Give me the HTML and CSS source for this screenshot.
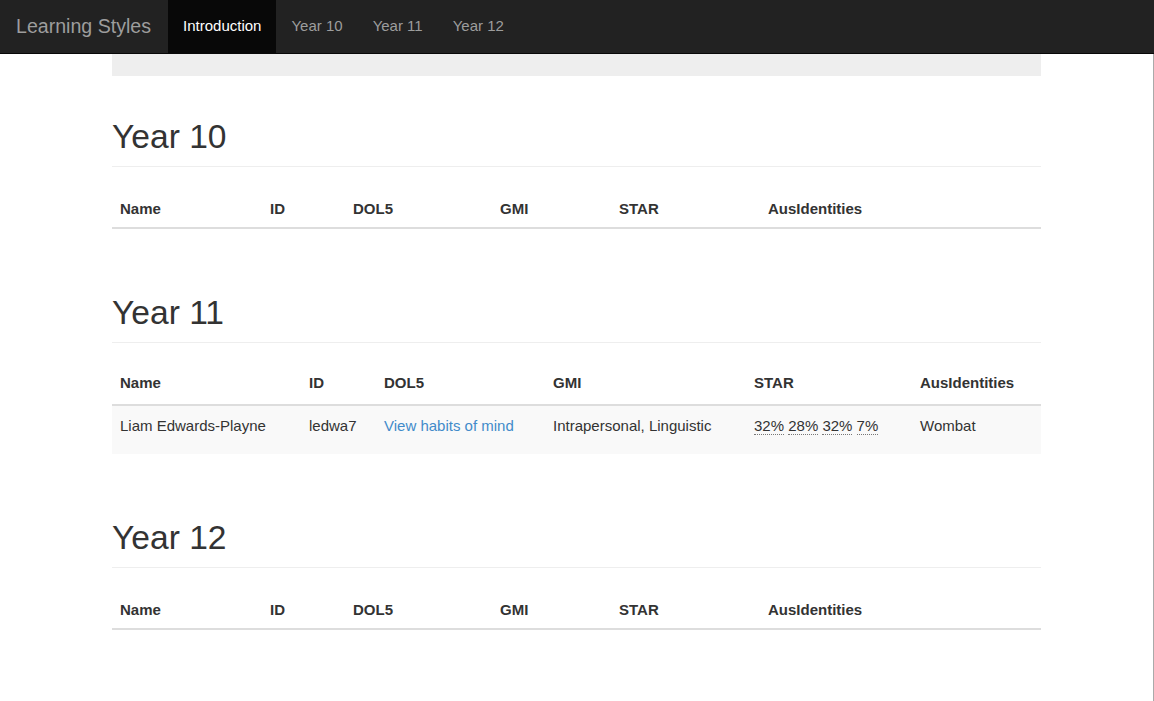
FILE: index.html
```html
<!DOCTYPE html>
<html lang="en">
<head>
<meta charset="utf-8">
<title>Learning Styles</title>
<link rel="stylesheet" href="styles.css">
</head>
<body>
<nav class="navbar">
  <a class="brand" href="#">Learning Styles</a>
  <ul class="nav">
    <li class="active"><a href="#">Introduction</a></li>
    <li><a href="#">Year 10</a></li>
    <li><a href="#">Year 11</a></li>
    <li><a href="#">Year 12</a></li>
  </ul>
</nav>
<div class="edge"></div>
<main class="container">
  <div class="jumbotron"></div>

  <section class="year">
    <h1 class="page-header">Year 10</h1>
    <table class="table t-empty">
      <thead>
        <tr><th class="c1">Name</th><th class="c2">ID</th><th class="c3">DOL5</th><th class="c4">GMI</th><th class="c5">STAR</th><th class="c6">AusIdentities</th></tr>
      </thead>
      <tbody></tbody>
    </table>
  </section>

  <section class="year">
    <h1 class="page-header">Year 11</h1>
    <table class="table t-full">
      <thead>
        <tr><th class="c1">Name</th><th class="c2">ID</th><th class="c3">DOL5</th><th class="c4">GMI</th><th class="c5">STAR</th><th class="c6">AusIdentities</th></tr>
      </thead>
      <tbody>
        <tr>
          <td>Liam Edwards-Playne</td>
          <td>ledwa7</td>
          <td><a class="link" href="#">View habits of mind</a></td>
          <td>Intrapersonal, Linguistic</td>
          <td><abbr title="Self">32%</abbr> <abbr title="Team">28%</abbr> <abbr title="Action">32%</abbr> <abbr title="Reflection">7%</abbr></td>
          <td>Wombat</td>
        </tr>
      </tbody>
    </table>
  </section>

  <section class="year">
    <h1 class="page-header">Year 12</h1>
    <table class="table t-empty">
      <thead>
        <tr><th class="c1">Name</th><th class="c2">ID</th><th class="c3">DOL5</th><th class="c4">GMI</th><th class="c5">STAR</th><th class="c6">AusIdentities</th></tr>
      </thead>
      <tbody></tbody>
    </table>
  </section>
</main>
</body>
</html>
```

FILE: styles.css
```css
* { box-sizing: border-box; }

html, body {
  margin: 0;
  padding: 0;
  background: #fff;
}

body {
  font-family: "Liberation Sans", Arial, sans-serif;
  font-size: 15px;
  line-height: 20px;
  color: #333;
}

.navbar {
  display: flex;
  align-items: stretch;
  height: 54px;
  background: #222;
  border-bottom: 1px solid #080808;
}

.brand {
  display: block;
  padding: 0 17px 0 16px;
  font-size: 19.6px;
  line-height: 52px;
  color: #9d9d9d;
  text-decoration: none;
}

.nav {
  display: flex;
  list-style: none;
  margin: 0;
  padding: 0;
}

.nav a {
  display: block;
  padding: 0 15px;
  line-height: 52px;
  height: 53px;
  color: #9d9d9d;
  text-decoration: none;
}

.nav .active a {
  background: #080808;
  color: #fff;
}

.edge {
  position: fixed;
  top: 54px;
  right: 0;
  bottom: 0;
  width: 1px;
  background: #aaa;
}

.container {
  display: flex;
  flex-direction: column;
  width: 929px;
  margin-left: 112px;
}

.jumbotron {
  height: 22px;
  background: #eee;
}

.page-header {
  margin: 40px 0 24px;
  padding-bottom: 9px;
  border-bottom: 1px solid #eee;
  font-size: 33.6px;
  font-weight: 500;
  line-height: 40px;
  color: #333;
}

.year:first-of-type .page-header {
  margin-top: 41px;
}

.table {
  width: 100%;
  table-layout: fixed;
  border-collapse: collapse;
  border-spacing: 0;
  margin-bottom: 24px;
}

.table th,
.table td {
  padding: 8px;
  text-align: left;
  vertical-align: top;
}

.table th {
  vertical-align: bottom;
  font-weight: bold;
  border-bottom: 2px solid #ddd;
}

.t-full th {
  padding-top: 6px;
  padding-bottom: 11px;
}

.table td {
  padding-top: 10px;
  height: 49px;
  background: #f9f9f9;
}

.t-empty .c1 { width: 150px; }
.t-empty .c2 { width: 83px; }
.t-empty .c3 { width: 147px; }
.t-empty .c4 { width: 119px; }
.t-empty .c5 { width: 149px; }
.t-empty .c6 { width: 281px; }

.t-full .c1 { width: 189px; }
.t-full .c2 { width: 75px; }
.t-full .c3 { width: 169px; }
.t-full .c4 { width: 201px; }
.t-full .c5 { width: 166px; }
.t-full .c6 { width: 129px; }

.link {
  color: #428bca;
  text-decoration: none;
}

abbr {
  text-decoration: none;
  border-bottom: 1px dotted #777;
  cursor: help;
}
```
